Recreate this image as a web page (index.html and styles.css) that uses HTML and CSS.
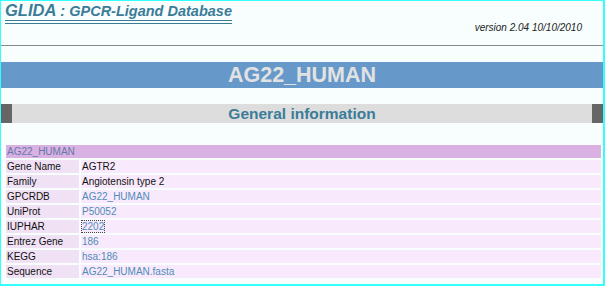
FILE: index.html
```html
<!DOCTYPE html>
<html>
<head lang="en">
    <meta charset="UTF-8">
    <title>GLIDA : AG22_HUMAN</title>
    <link rel="stylesheet" href="styles.css">
</head>
<body>
    <div id="page">
        <!-- header -->
        <div id="top">
            <div class="logo"><span class="big">GLIDA</span> : GPCR-Ligand Database</div>
            <div class="version">version 2.04 10/10/2010</div>
        </div>

        <div class="entry">AG22_HUMAN</div>

        <div class="section">
            <span class="side"></span>
            <span class="caption">General information</span>
            <span class="side"></span>
        </div>

        <!-- info table -->
        <table class="info">
            <tr><th colspan="2">AG22_HUMAN</th></tr>
            <tr><td class="key">Gene Name</td><td>AGTR2</td></tr>
            <tr><td class="key">Family</td><td>Angiotensin type 2</td></tr>
            <tr><td class="key">GPCRDB</td><td><a href="#">AG22_HUMAN</a></td></tr>
            <tr><td class="key">UniProt</td><td><a href="#">P50052</a></td></tr>
            <tr><td class="key">IUPHAR</td><td><a href="#" class="focus">2202</a></td></tr>
            <tr><td class="key">Entrez Gene</td><td><a href="#">186</a></td></tr>
            <tr><td class="key">KEGG</td><td><a href="#">hsa:186</a></td></tr>
            <tr><td class="key">Sequence</td><td><a href="#">AG22_HUMAN.fasta</a></td></tr>
        </table>
    </div>
</body>
</html>
```

FILE: styles.css
```css
*{
    margin: 0px;
    padding: 0px;
}

body{
    font-family: "Liberation Sans", Arial, sans-serif;
    background: #f8fefe;
}

#page{
    height: 286px;
    box-sizing: border-box;
    border: 2px solid #33ffff;
    border-top-width: 1px;
    border-left-width: 1px;
    overflow: hidden;
}

#top{
    height: 44px;
    border-bottom: 1px solid #888888;
    padding-left: 4px;
}

#top .logo{
    display: inline-block;
    font-style: italic;
    font-weight: bold;
    font-size: 14.5px;
    color: #3b7c98;
    border-bottom: 4px double #3b7c98;
    line-height: 18px;
}

#top .logo .big{
    font-size: 16.5px;
}

#top .version{
    text-align: right;
    font-style: italic;
    font-size: 10px;
    color: #222222;
    padding-right: 21px;
    margin-top: -2px;
}

.entry{
    margin-top: 16px;
    height: 26px;
    line-height: 26px;
    background: #6699c9;
    color: #e2e2e2;
    text-align: center;
    font-size: 21.5px;
    font-weight: bold;
}

.section{
    margin-top: 16px;
    height: 19px;
    display: flex;
    background: #dddddd;
}

.section .side{
    width: 11px;
    background: #666666;
}

.section .caption{
    flex: 1;
    text-align: center;
    line-height: 19px;
    font-size: 15.5px;
    font-weight: bold;
    color: #3b7c98;
}

.info{
    width: 599px;
    margin: 20px 0 0 3px;
    border-spacing: 2px;
    font-size: 10px;
}

.info th{
    text-align: left;
    font-weight: normal;
    background: #d9b1e3;
    color: #6678a6;
    height: 13px;
    line-height: 13px;
    padding: 0 1px;
}

.info td{
    background: #f9e9fd;
    height: 13px;
    line-height: 13px;
    padding: 0 1px;
    color: #111111;
}

.info td.key{
    width: 71px;
    background: #f1e1f5;
}

.info a{
    color: #4f8cb5;
    text-decoration: none;
}

.info a.focus{
    outline: 1px dotted #444444;
}
```
